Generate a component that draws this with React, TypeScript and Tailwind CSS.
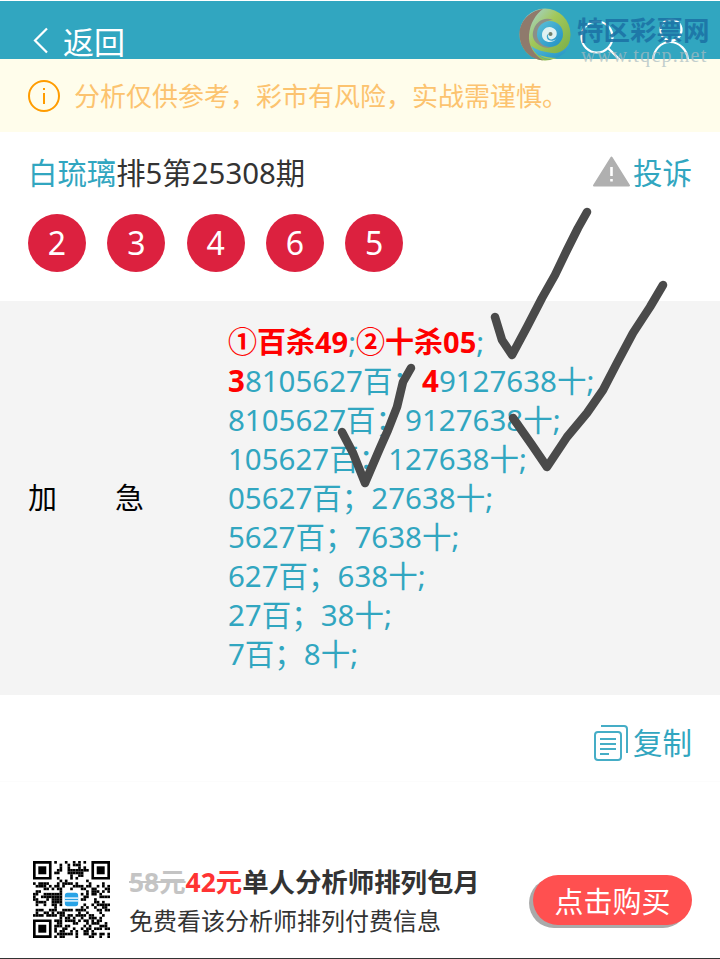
const CJK = "font-['Noto_Sans','Noto_Sans_CJK_SC',sans-serif]";

const balls = ["2", "3", "4", "6", "5"];

const lines = [
  "8105627百；9127638十;",
  "105627百；127638十;",
  "05627百；27638十;",
  "5627百；7638十;",
  "627百；638十;",
  "27百；38十;",
  "7百；8十;",
];

const finder = (x: number, y: number) => (
  <g key={`${x}-${y}`}>
    <path fillRule="evenodd" d={`M${x} ${y}h7v7h-7zM${x + 1} ${y + 1}v5h5v-5z`} />
    <rect x={x + 2} y={y + 2} width="3" height="3" />
  </g>
);

// rough module pattern for the code, not a scannable one
const qrCells = Array.from({ length: 29 * 29 }, (_, i) => {
  const x = i % 29;
  const y = Math.floor(i / 29);
  const inFinder = (x < 8 && y < 8) || (x > 20 && y < 8) || (x < 8 && y > 20);
  const inLogo = x > 10 && x < 18 && y > 10 && y < 18;
  const n = Math.sin(x * 12.9898 + y * 78.233) * 43758.5453;
  const on = n - Math.floor(n) < 0.52;
  return !inFinder && !inLogo && on ? { x, y } : null;
}).filter(Boolean) as { x: number; y: number }[];

function Watermark() {
  return (
    <div className="absolute left-[519px] top-[8px] z-10 w-[200px] h-[60px]">
      <svg width="52" height="53" viewBox="0 0 52 53" className="absolute left-0 top-0">
        <defs>
          <linearGradient id="logoGreen" x1="0.2" y1="0" x2="1" y2="0.7">
            <stop offset="0" stopColor="#a5d3dc" />
            <stop offset="0.45" stopColor="#a2c85a" />
            <stop offset="1" stopColor="#7fb24a" />
          </linearGradient>
          <linearGradient id="logoBlue" x1="0" y1="0" x2="1" y2="1">
            <stop offset="0" stopColor="#5cc0d8" />
            <stop offset="1" stopColor="#1f8fc4" />
          </linearGradient>
        </defs>
        <ellipse cx="26" cy="26.5" rx="25.5" ry="26" fill="url(#logoGreen)" />
        <path d="M24 1C9 3 0 15 .5 27 1 41 11 51 24 52.5 15 47 9 37 10 27 11 15 17 6 24 1z" fill="#8f7a6c" />
        <path d="M12 38c4 9 12 14 22 13 9-2 15-8 17-17-4 8-11 12-18 11-8-1-15-3-21-7z" fill="url(#logoBlue)" />
        <path d="M20 47c5 4 12 5 18 3-6 0-12-1-18-3z" fill="#a2c85a" />
        <path d="M14 24c2-10 11-16 20-12-7 0-13 5-14 12-1 8 5 15 13 16-10 1-21-6-19-16z" fill="#8d8f86" />
        <circle cx="31" cy="26" r="13" fill="url(#logoBlue)" />
        <path d="M23 27c0-6 6-10 11-7 5 2 5 9 0 11-2 1-5 0-5-3 0-2 2-3 3-2-3-1-5 1-4 4 1 3 6 4 9 1-3 5-14 4-14-4z" fill="#dff1f2" />
        <circle cx="31.5" cy="26" r="2" fill="#6f7f6c" />
      </svg>
      <div className="absolute left-[58px] top-[6px] text-[26.5px] leading-[30px] font-bold whitespace-nowrap text-[#1c74a6] opacity-90 font-['Noto_Sans_CJK_SC',sans-serif]">
        特区彩票网
      </div>
      <div className="absolute left-[62px] top-[38px] text-[20px] leading-[18px] tracking-[1.3px] whitespace-nowrap text-[#a9bcc2] opacity-70 font-['Liberation_Serif',serif]">
        www.tqcp.net
      </div>
    </div>
  );
}

export default function App() {
  return (
    <div className={`relative w-[720px] h-[959px] overflow-hidden bg-white ${CJK}`}>
      <header className="relative mt-px h-[58px] bg-[#31a6c0] overflow-hidden">
        <div className="flex items-center pl-[33px] pt-[24px] text-white">
          <svg width="16" height="27" viewBox="0 0 16 27" fill="none" stroke="white" strokeWidth="2.2" className="-mt-[3px]">
            <path d="M14 1.5 2 13.5l12 12" />
          </svg>
          <span className="ml-[14px] text-[31px] leading-[34px]">返回</span>
        </div>
        <svg width="120" height="58" viewBox="0 0 120 58" fill="none" stroke="white" strokeWidth="2.2" className="absolute left-[580px] top-0">
          <circle cx="17" cy="36" r="15.5" />
          <path d="m28 47 12 12" />
          <circle cx="91" cy="29" r="10.5" />
          <path d="M73 60c0-11 8-19 17-19s18 8 18 19" />
        </svg>
      </header>

      <div className="flex items-center h-[73px] pl-[28px] bg-[#fffdeb]">
        <svg width="32" height="32" viewBox="0 0 32 32" fill="none" stroke="#ff9c00" strokeWidth="2">
          <circle cx="16" cy="16" r="15" />
          <path d="M16 13v11M16 8v2" />
        </svg>
        <span className="ml-[14px] mt-[2px] text-[26px] text-[#fcc36f]">分析仅供参考，彩市有风险，实战需谨慎。</span>
      </div>

      <div className="flex items-center justify-between h-[82px] pl-[28px] pr-[28px]">
        <div className="text-[29.4px] text-[#333]">
          <span className="text-[#31a6c0]">白琉璃</span>排5第25308期
        </div>
        <div className="flex items-center gap-[3px] text-[29.5px] text-[#31a6c0]">
          <svg width="37" height="31" viewBox="0 0 37 31" className="-mt-[3px]">
            <path d="M18.5 1.5 36 29.5H1z" fill="#b0b0b0" stroke="#b0b0b0" strokeWidth="2" strokeLinejoin="round" />
            <path d="M18.5 11v9M18.5 23v2.6" stroke="white" strokeWidth="2.6" />
          </svg>
          投诉
        </div>
      </div>

      <div className="flex pl-[28px] gap-[21.3px] h-[87px]">
        {balls.map((n) => (
          <div key={n} className="flex items-center justify-center w-[58px] h-[58px] rounded-full bg-[#dc213f] text-white text-[32px]">
            {n}
          </div>
        ))}
      </div>

      <section className="flex items-center h-[394px] bg-[#f4f4f4]">
        <div className="flex justify-between w-[116px] ml-[28px] text-[29px] text-black">
          <span>加</span>
          <span>急</span>
        </div>
        <div className="ml-[84px] mb-[2px] text-[29.5px] leading-[39px] text-[#31a6c0] whitespace-nowrap">
          <div>
            <span className="font-bold text-[29px] text-[#ff0000]">①百杀49</span>
            <span>;</span>
            <span className="font-bold text-[29px] text-[#ff0000]">②十杀05</span>;
          </div>
          <div>
            <span className="font-bold text-[#ff0000]">3</span>8105627百；
            <span className="font-bold text-[#ff0000]">4</span>9127638十;
          </div>
          {lines.map((l) => (
            <div key={l}>{l}</div>
          ))}
        </div>
      </section>

      <div className="flex justify-end items-center h-[87px] pt-[11px] pr-[28px] border-b border-[#fcfcfc] text-[29.5px] text-[#31a6c0]">
        <svg width="36" height="38" viewBox="0 0 36 38" fill="none" stroke="#45adc6" strokeWidth="2" className="mr-[4px] -mt-[2px]">
          <rect x="2" y="8" width="26" height="28" rx="3" />
          <path d="M8 2h23a3 3 0 0 1 3 3v24" />
          <path d="M7 15h16M7 20h16M7 25h16M7 30h9" />
        </svg>
        复制
      </div>

      <div className="flex items-center pt-[77px] pl-[33px] pr-[28px]">
        <svg width="77" height="77" viewBox="0 0 29 29" className="shrink-0">
          {qrCells.map((c) => (
            <rect key={`${c.x}-${c.y}`} x={c.x} y={c.y} width="1" height="1" />
          ))}
          {finder(0, 0)}
          {finder(22, 0)}
          {finder(0, 22)}
          <rect x="12" y="12" width="5" height="5" rx="1" fill="#29a3e6" />
          <path d="M12 14h5M12 15h5" stroke="#cfeafa" strokeWidth="0.7" />
        </svg>
        <div className="ml-[19px] flex-1 pt-[5px]">
          <div className="text-[26.4px] leading-[36px] font-bold text-[#333] whitespace-nowrap">
            <span className="text-[#c4c4c4] line-through">58元</span>
            <span className="text-[#ff3333]">42元</span>单人分析师排列包月
          </div>
          <div className="mt-[3px] text-[24px] leading-[36px] text-[#333] whitespace-nowrap">免费看该分析师排列付费信息</div>
        </div>
        <button className="w-[159px] h-[50px] mt-[2px] pt-[3px] rounded-full bg-[#ff5050] text-white text-[29px] shadow-[-4px_3px_0_#aaaaaa]">
          点击购买
        </button>
      </div>

      <div className="absolute left-0 right-0 bottom-0 h-px bg-[#333]" />
      <Watermark />
      <svg width="720" height="959" viewBox="0 0 720 959" fill="none" stroke="#4a4a4a" strokeWidth="8.5" strokeLinecap="round" strokeLinejoin="round" className="absolute left-0 top-0 z-20 pointer-events-none">
        <path d="M587 212 578 228 567 250 555 275 542 298 527 327 512 355 502 340 495 317" />
        <path d="M663 285 650 307 633 333 617 363 603 390 587 413 567 437 547 467 532 445 513 418" />
        <path d="M411 368 403 382 397 407 388 430 380 448 365 483 353 453 342 432" />
      </svg>
    </div>
  );
}
